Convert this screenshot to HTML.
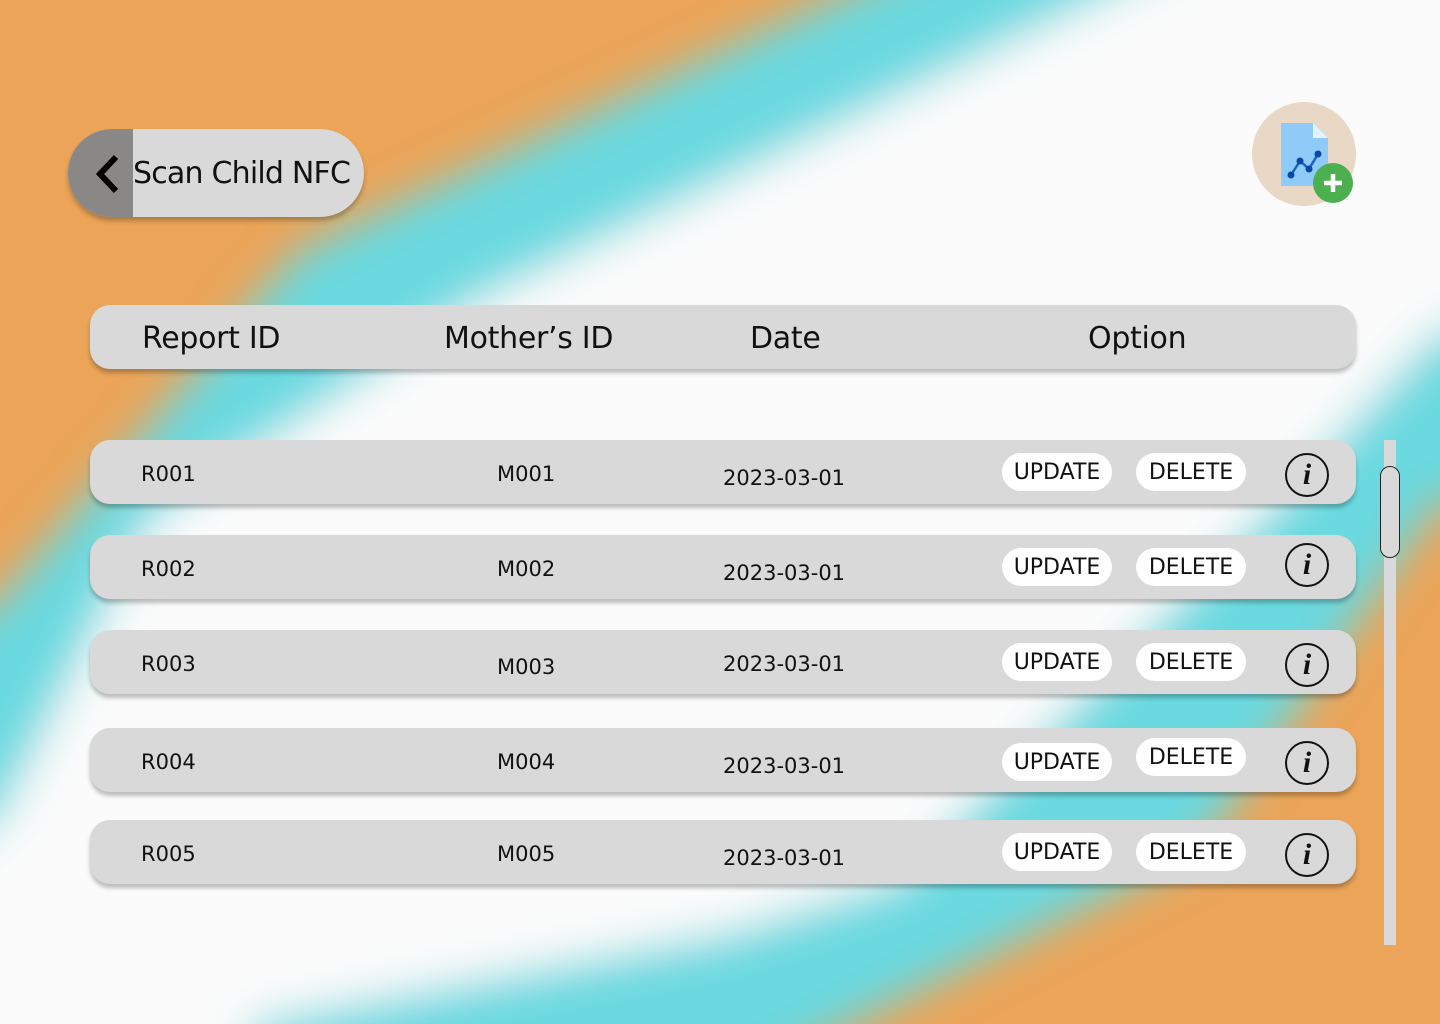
<!DOCTYPE html>
<html style="overflow:hidden;width:1440px;height:1024px"><head><style>
body{margin:0;width:1440px;height:1024px;overflow:hidden;position:relative;font-family:"DejaVu Sans","Liberation Sans",sans-serif;background:#eba458}
.bg{position:absolute;left:0;top:0;display:block}
.back{position:absolute;left:68px;top:129px;width:296px;height:88px;border-radius:44px;background:#d9d9d9;overflow:hidden;box-shadow:0 4px 5px rgba(0,0,0,.25)}
.back .g{position:absolute;left:0;top:0;width:65px;height:88px;background:#8a8787}
.back span{position:absolute;left:65px;top:27px;font-size:30px;color:#111;letter-spacing:-0.8px}
.icon{position:absolute;left:1252px;top:102px;width:104px;height:104px;border-radius:50%;background:#e8d8c5}
.bar{position:absolute;left:90px;width:1266px;height:64px;border-radius:20px;background:#d9d9d9;box-shadow:0 4px 4px rgba(0,0,0,.25)}
.bar div{position:absolute;color:#111}
.hd div{font-size:30px;top:16px;letter-spacing:-0.3px}
.row div.t{font-size:21px;top:22px}
.btn{position:absolute;background:#fff;border-radius:20px;height:38px;font-size:22px;line-height:40px;text-align:center;width:110px;top:13px}
.info{position:absolute;left:1195px;top:13px;width:40px;height:40px;border:2px solid #111;border-radius:50%;font-family:"Liberation Serif",serif;font-style:italic;font-weight:bold;font-size:30px;line-height:40px;text-align:center}
.track{position:absolute;left:1384px;top:440px;width:12px;height:505px;background:#d9d9d9}
.thumb{position:absolute;left:1380px;top:466px;width:18px;height:90px;border:1.5px solid #222;border-radius:10px;background:#d9d9d9}
</style></head><body>
<svg class="bg" width="1440" height="1024">
<defs><filter id="b" x="-10%" y="-10%" width="120%" height="120%"><feGaussianBlur stdDeviation="22"/></filter></defs>
<g filter="url(#b)">
<path d="M960,-60 L1500,-60 L1500,360 L1440,330 L900,900 L250,1100 L-60,1100 L-60,640 L0,600 L300,250 Z" fill="#6ad9e0"/>
<path d="M1220,-60 L1500,-60 L1500,300 L1440,340 L900,880 L250,1080 L-60,1080 L-60,860 L0,820 L150,520 L480,300 Z" fill="#fbfbfb"/>
<path d="M1500,330 L1440,330 L900,900 L250,1024 L250,1100 L700,1100 L1200,850 L1440,500 L1500,500 Z" fill="#6ad9e0"/>
</g></svg>
<div class="back"><div class="g"></div>
<svg style="position:absolute;left:26px;top:25px" width="28" height="40"><path d="M22 3 L6 20 L22 37" stroke="#000" stroke-width="6" fill="none"/></svg>
<span>Scan Child NFC</span></div>
<div class="icon"><svg width="104" height="104">
<path d="M29 21 H61 L76 36 V84 H29 Z" fill="#90caf9"/><path d="M61 21 L76 36 H61 Z" fill="#e3f2fd"/>
<polyline points="39,73 48,59 57,67 66,52" stroke="#1565c0" stroke-width="2.5" fill="none"/>
<circle cx="39" cy="73" r="3.5" fill="#0d47a1"/><circle cx="48" cy="59" r="3.5" fill="#0d47a1"/><circle cx="57" cy="67" r="3.5" fill="#0d47a1"/><circle cx="66" cy="52" r="3.5" fill="#0d47a1"/>
<circle cx="81" cy="81" r="20" fill="#4caf50"/><path d="M81 72 V90 M72 81 H90" stroke="#fff" stroke-width="4.5"/>
</svg></div>
<div class="bar hd" style="top:305px"><div style="left:52px">Report ID</div><div style="left:354px">Mother’s ID</div><div style="left:660px">Date</div><div style="left:998px">Option</div></div>
<div class="bar row" style="top:440px"><div class="t" style="left:51px">R001</div><div class="t" style="left:407px">M001</div><div class="t" style="left:633px;top:26px">2023-03-01</div><div class="btn" style="left:912px">UPDATE</div><div class="btn" style="left:1046px">DELETE</div><div class="info">i</div></div>
<div class="bar row" style="top:535px"><div class="t" style="left:51px">R002</div><div class="t" style="left:407px">M002</div><div class="t" style="left:633px;top:26px">2023-03-01</div><div class="btn" style="left:912px">UPDATE</div><div class="btn" style="left:1046px">DELETE</div><div class="info" style="top:8px">i</div></div>
<div class="bar row" style="top:630px"><div class="t" style="left:51px">R003</div><div class="t" style="left:407px;top:25px">M003</div><div class="t" style="left:633px">2023-03-01</div><div class="btn" style="left:912px">UPDATE</div><div class="btn" style="left:1046px">DELETE</div><div class="info">i</div></div>
<div class="bar row" style="top:728px"><div class="t" style="left:51px">R004</div><div class="t" style="left:407px">M004</div><div class="t" style="left:633px;top:26px">2023-03-01</div><div class="btn" style="left:912px;top:15px">UPDATE</div><div class="btn" style="left:1046px;top:10px">DELETE</div><div class="info">i</div></div>
<div class="bar row" style="top:820px"><div class="t" style="left:51px">R005</div><div class="t" style="left:407px">M005</div><div class="t" style="left:633px;top:26px">2023-03-01</div><div class="btn" style="left:912px">UPDATE</div><div class="btn" style="left:1046px">DELETE</div><div class="info">i</div></div>
<div class="track"></div><div class="thumb"></div>
</body></html>
